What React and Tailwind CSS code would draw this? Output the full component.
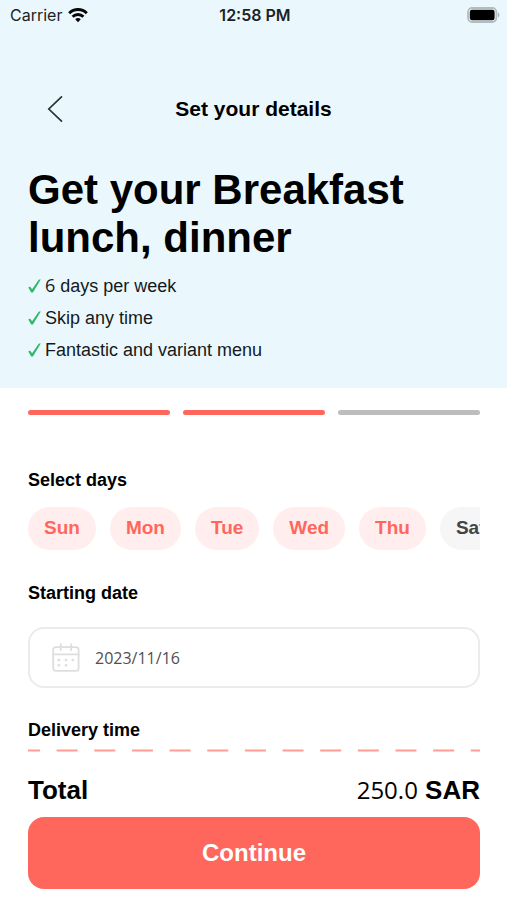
import { useState } from 'react';

const perks = [
  { count: '6', text: ' days per week' },
  { text: 'Skip any time' },
  { text: 'Fantastic and variant menu' },
];

const weekDays = ['Sun', 'Mon', 'Tue', 'Wed', 'Thu', 'Sat'];

function StatusBar() {
  return (
    <div className="grid grid-cols-3 items-center h-[30px] pl-[10px] pr-[7px] font-['Inter',sans-serif] text-[16px] text-[#1c2326]">
      <div className="flex items-center gap-[6px]">
        <span>Carrier</span>
        <svg width="20" height="16" viewBox="0 0 20 16" fill="none" stroke="#050708" strokeWidth="2.9" aria-hidden="true">
          <path d="M1.2 6.2C6.1 1.3 13.9 1.3 18.8 6.2" />
          <path d="M4.6 9.7c3-3 7.8-3 10.8 0" />
          <path d="M7.2 12.2 10 15.2 12.8 12.2c-1.6-1.5-4-1.5-5.6 0Z" fill="#050708" stroke="none" />
        </svg>
      </div>
      <div className="text-center font-semibold whitespace-nowrap">12:58 PM</div>
      <div className="flex justify-end">
        <svg width="33" height="16" viewBox="0 0 33 16" aria-hidden="true">
          <rect x="1" y="1" width="28.4" height="14" rx="4.2" fill="none" stroke="#b3bcbf" strokeWidth="1.8" />
          <rect x="2.8" y="2.8" width="24.8" height="10.4" rx="2.2" fill="#000" />
          <path d="M31 5.6c1.8.7 1.8 4.1 0 4.8Z" fill="#a5aeb1" />
        </svg>
      </div>
    </div>
  );
}

function CheckMark() {
  return (
    <svg width="13" height="14" viewBox="0 0 13 14" aria-hidden="true">
      <path d="M.3 8.6 2 7.4 4.1 10.3 10.9.6 12.8.6 4.9 13.4 3.2 13.4Z" fill="#2fb96c" />
    </svg>
  );
}

function CalendarIcon() {
  return (
    <svg width="28" height="30" viewBox="0 0 28 30" fill="none" stroke="#dedede" strokeWidth="1.8" strokeLinecap="round" aria-hidden="true">
      <rect x="1.2" y="4.2" width="25.4" height="23.6" rx="2.6" />
      <path d="M1.2 11.4h25.4M8.8 1.2v6M19.2 1.2v6" />
      <path d="M6.6 17h.5M13.8 17h.5M20.6 17h.5M6.6 22.3h.5M13.8 22.3h.5" strokeWidth="2.4" />
    </svg>
  );
}

export default function App() {
  const [selectedDays, setSelectedDays] = useState(['Sun', 'Mon', 'Tue', 'Wed', 'Thu']);
  const [startDate, setStartDate] = useState('2023/11/16');

  const toggleDay = (day) => {
    setSelectedDays((days) =>
      days.includes(day) ? days.filter((d) => d !== day) : [...days, day]
    );
  };

  return (
    <div className="min-h-screen flex flex-col bg-white text-black font-['Liberation_Sans',Arial,sans-serif]">
      <header className="bg-[#eaf8fe] pb-[22px]">
        <StatusBar />
        <div className="grid grid-cols-[1fr_auto_1fr] items-center mt-[63px] px-7">
          <button type="button" aria-label="Back" className="justify-self-start pl-[19px]">
            <svg width="16" height="28" viewBox="0 0 16 28" fill="none" stroke="#2b3235" strokeWidth="1.7" aria-hidden="true">
              <path d="M15 1.3 1.8 14 15 26.7" />
            </svg>
          </button>
          <h1 className="text-[21px] leading-8 font-bold">Set your details</h1>
        </div>

        <div className="mt-[41px] px-7">
          <h2 className="text-[42px] leading-[48px] font-bold">
            Get your Breakfast
            <br />
            lunch, dinner
          </h2>
          <ul className="mt-2 text-[18px] leading-8 text-[#15191b]">
            {perks.map((perk) => (
              <li key={perk.text} className="flex items-center gap-1">
                <CheckMark />
                <span>
                  {perk.count && <span className="font-['Open_Sans',sans-serif] leading-none">{perk.count}</span>}
                  {perk.text}
                </span>
              </li>
            ))}
          </ul>
        </div>
      </header>

      <main className="pl-7 pr-[27px] pt-[22px]">
        <div className="flex gap-[13px]">
          <div className="h-[5px] flex-1 rounded-full bg-[#ff675c]" />
          <div className="h-[5px] flex-1 rounded-full bg-[#ff675c]" />
          <div className="h-[5px] flex-1 rounded-full bg-[#bdbdbd]" />
        </div>

        <h3 className="mt-[53px] text-[18px] leading-6 font-bold">Select days</h3>
        <div className="mt-[15px] flex gap-[14px] overflow-x-auto [scrollbar-width:none]">
          {weekDays.map((day) => (
            <button
              key={day}
              type="button"
              aria-pressed={selectedDays.includes(day)}
              onClick={() => toggleDay(day)}
              className={`h-[43px] shrink-0 px-4 rounded-full text-[19px] font-bold ${
                selectedDays.includes(day) ? 'bg-[#ffeeed] text-[#ff675c]' : 'bg-[#f6f6f6] text-[#444444]'
              }`}
            >
              {day}
            </button>
          ))}
        </div>

        <label htmlFor="startDate" className="block mt-[31px] text-[18px] leading-6 font-bold">
          Starting date
        </label>
        <div className="mt-[22px] flex items-center gap-[15px] h-[61px] px-[22px] border-2 border-[#ebebeb] rounded-2xl">
          <CalendarIcon />
          <input
            id="startDate"
            type="text"
            value={startDate}
            onChange={(e) => setStartDate(e.target.value)}
            className="flex-1 min-w-0 outline-none text-[16px] leading-6 text-[#505050] font-['Open_Sans',sans-serif]"
          />
        </div>

        <h3 className="mt-[30px] text-[18px] leading-6 font-bold">Delivery time</h3>
      </main>

      <footer className="mt-auto pl-7 pr-[27px] pt-[7px] pb-[11px]">
        <svg className="block w-full h-[3px]" aria-hidden="true">
          <line x1="0" y1="1.5" x2="100%" y2="1.5" stroke="#ff9d94" strokeWidth="2" strokeDasharray="21 16.65" strokeDashoffset="9" />
        </svg>
        <div className="mt-[22px] flex items-baseline justify-between text-[26px] leading-8 font-bold">
          <span>Total</span>
          <span>
            <span className="font-['Open_Sans',sans-serif] text-[24px] leading-none font-medium">250.0</span> SAR
          </span>
        </div>
        <button type="button" className="mt-[11px] w-full h-[72px] rounded-2xl bg-[#ff675c] text-white text-2xl font-bold">
          Continue
        </button>
      </footer>
    </div>
  );
}
